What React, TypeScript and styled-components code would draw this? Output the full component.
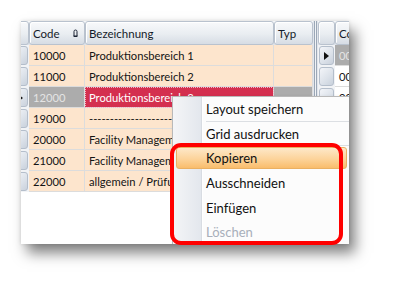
import React from "react";
import styled, { createGlobalStyle } from "styled-components";

const GlobalStyle = createGlobalStyle`
  html, body {
    margin: 0;
    padding: 0;
    background: #ffffff;
  }
  body {
    font-family: Lato, "Open Sans", "Liberation Sans", sans-serif;
  }
`;

const Page = styled.div`
  width: 393px;
  height: 287px;
  padding: 21px 0 0 21px;
  box-sizing: border-box;
  background: #ffffff;
`;

const Stage = styled.div`
  position: relative;
  width: 328px;
  height: 223px;
`;

const Window = styled.div`
  position: relative;
  display: flex;
  width: 100%;
  height: 100%;
  overflow: hidden;
  background: #ffffff;
  box-shadow: 6px 9px 13px rgba(0, 0, 0, 0.5), 0 0 4px rgba(0, 0, 0, 0.12);
`;

const Grid = styled.div<{ $shift?: number }>`
  display: flex;
  flex-direction: column;
  flex: none;
  margin-left: ${(p) => p.$shift ?? 0}px;
`;

const HeaderRow = styled.div`
  display: flex;
  height: 24px;
  background: linear-gradient(#f5f7f9, #dde2e9);
`;

const HeadCell = styled.div<{ $w: number }>`
  width: ${(p) => p.$w}px;
  flex: none;
  display: flex;
  align-items: center;
  justify-content: space-between;
  padding: 0 6px 0 3px;
  box-sizing: border-box;
  border: 1px solid #b9c2ce;
  border-radius: 3px;
  background: linear-gradient(#f8f9fb, #e9edf1 55%, #d6dce4);
  box-shadow: inset 1px 1px 0 #ffffff;
  font-size: 11.5px;
  color: #141b29;
  white-space: nowrap;
  overflow: hidden;
`;

const Row = styled.div`
  display: flex;
  height: 21px;
`;

const cellColors = {
  normal: { bg: "#fde5cd", fg: "#141414" },
  dim: { bg: "#acacac", fg: "#e4e4e4" },
  focus: { bg: "#d42f4f", fg: "#ffffff" },
  white: { bg: "#ffffff", fg: "#141414" },
};

type CellKind = keyof typeof cellColors;

const Cell = styled.div<{ $w: number; $kind: CellKind }>`
  width: ${(p) => p.$w}px;
  flex: none;
  display: flex;
  align-items: center;
  padding-left: 4px;
  box-sizing: border-box;
  background: ${(p) => cellColors[p.$kind].bg};
  color: ${(p) => cellColors[p.$kind].fg};
  border-right: 1px solid #dcdcdc;
  border-bottom: 1px solid #dcdcdc;
  outline: ${(p) => (p.$kind === "focus" ? "1px dotted #f4b8c4" : "none")};
  outline-offset: -1px;
  font-size: 11.2px;
  white-space: nowrap;
  overflow: hidden;
`;

const Indicator = styled.div`
  width: 17px;
  flex: none;
  padding: 1px;
  box-sizing: border-box;
  background: #f1f3f6;
`;

const Knob = styled.div`
  height: 100%;
  display: flex;
  align-items: center;
  justify-content: center;
  box-sizing: border-box;
  border: 1px solid #b4becb;
  border-radius: 3px;
  background: linear-gradient(135deg, #f3f5f9, #dbe1e9 60%, #c9d1dc);
`;

const Splitter = styled.div`
  width: 5px;
  flex: none;
  background: linear-gradient(
    to right,
    #e2e6ec 0 1px,
    #9ba7b6 1px 2px,
    #f1f3f6 2px 3px,
    #9ba7b6 3px 4px,
    #e2e6ec 4px
  );
`;

const Menu = styled.div`
  position: absolute;
  left: 151px;
  top: 75px;
  width: 177px;
  border: 1px solid #b9b9b9;
  background: linear-gradient(
    to right,
    #f4f5f7 0,
    #e3e7ed 28px,
    #d8dce2 28px 29px,
    #ffffff 29px 30px,
    #fcfcfc 30px
  );
  box-shadow: 2px 2px 4px rgba(0, 0, 0, 0.2);
  font-size: 13px;
`;

const MenuEntry = styled.div<{ $sep?: boolean }>`
  height: 24.7px;
  padding: 1px 3px 2px;
  box-sizing: border-box;
  background: ${(p) =>
    p.$sep
      ? "linear-gradient(#dcdfe3, #dcdfe3) no-repeat 33px 100% / calc(100% - 33px) 1px"
      : "none"};
`;

const MenuItem = styled.div<{ $active?: boolean; $disabled?: boolean }>`
  height: 100%;
  padding-left: 29px;
  display: flex;
  align-items: center;
  box-sizing: border-box;
  border: 1px solid ${(p) => (p.$active ? "#eab062" : "transparent")};
  border-radius: 3px;
  background: ${(p) =>
    p.$active ? "linear-gradient(#fde8c9, #fcd39a 55%, #f9bd6c)" : "transparent"};
  color: ${(p) => (p.$disabled ? "#a8afba" : "#111111")};
  white-space: nowrap;
`;

const Callout = styled.div`
  position: absolute;
  left: 149px;
  top: 122px;
  width: 173px;
  height: 102px;
  box-sizing: border-box;
  border: 4px solid #ff0000;
  border-radius: 11px;
`;

const SortGlyph = () => (
  <svg width="5" height="8" viewBox="0 0 5 8">
    <path d="M1 7.5 V2.5 A1.5 1.5 0 0 1 4 2.5 V7.5 Z" fill="none" stroke="#1d2535" strokeWidth="1" />
    <rect x="0.5" y="6.5" width="4" height="1" fill="#1d2535" />
  </svg>
);

const RowArrow = () => (
  <svg width="5" height="8" viewBox="0 0 5 8">
    <polygon points="0,0 5,4 0,8" fill="#111111" />
  </svg>
);

const rows = [
  { code: "10000", name: "Produktionsbereich 1" },
  { code: "11000", name: "Produktionsbereich 2" },
  { code: "12000", name: "Produktionsbereich 3", selected: true },
  { code: "19000", name: "-----------------------------" },
  { code: "20000", name: "Facility Management" },
  { code: "21000", name: "Facility Management" },
  { code: "22000", name: "allgemein / Prüfung" },
];

const sideRows = ["00", "00", "00", "00", "00", "00", "00"];

const menuEntries = [
  { label: "Layout speichern", sep: true },
  { label: "Grid ausdrucken", sep: true },
  { label: "Kopieren", active: true },
  { label: "Ausschneiden" },
  { label: "Einfügen" },
  { label: "Löschen", disabled: true },
];

export default function App() {
  return (
    <>
      <GlobalStyle />
      <Page>
        <Stage>
          <Window>
            <Grid $shift={-9}>
              <HeaderRow>
                <HeadCell $w={17} />
                <HeadCell $w={56}>
                  Code
                  <SortGlyph />
                </HeadCell>
                <HeadCell $w={189}>Bezeichnung</HeadCell>
                <HeadCell $w={39}>Typ</HeadCell>
              </HeaderRow>
              {rows.map((r) => (
                <Row key={r.code}>
                  <Indicator>
                    <Knob>{r.selected && <RowArrow />}</Knob>
                  </Indicator>
                  <Cell $w={56} $kind={r.selected ? "dim" : "normal"}>
                    {r.code}
                  </Cell>
                  <Cell $w={189} $kind={r.selected ? "focus" : "normal"}>
                    {r.name}
                  </Cell>
                  <Cell $w={39} $kind={r.selected ? "dim" : "normal"} />
                </Row>
              ))}
            </Grid>
            <Splitter />
            <Grid>
              <HeaderRow>
                <HeadCell $w={17} />
                <HeadCell $w={60}>Code</HeadCell>
              </HeaderRow>
              {sideRows.map((v, i) => (
                <Row key={i}>
                  <Indicator>
                    <Knob>{i === 0 && <RowArrow />}</Knob>
                  </Indicator>
                  <Cell $w={60} $kind={i === 0 ? "dim" : "white"}>
                    {v}
                  </Cell>
                </Row>
              ))}
            </Grid>
            <Menu>
              {menuEntries.map((m) => (
                <MenuEntry key={m.label} $sep={m.sep}>
                  <MenuItem $active={m.active} $disabled={m.disabled}>
                    {m.label}
                  </MenuItem>
                </MenuEntry>
              ))}
            </Menu>
          </Window>
          <Callout />
        </Stage>
      </Page>
    </>
  );
}
